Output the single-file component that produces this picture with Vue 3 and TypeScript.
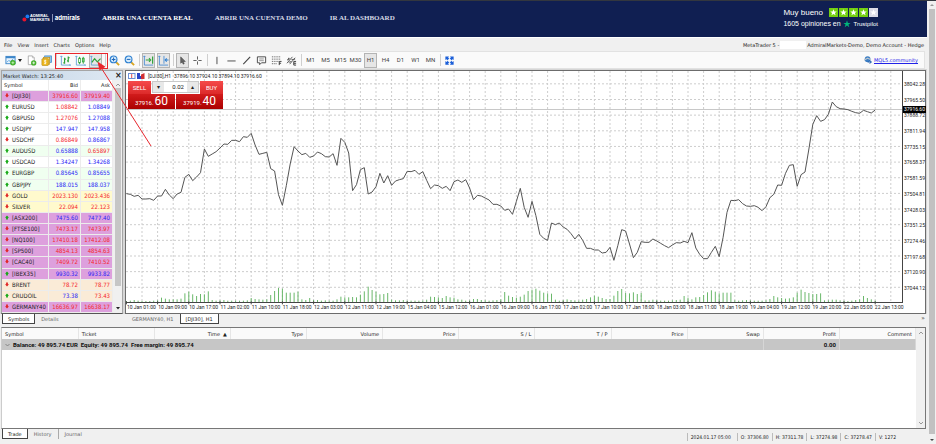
<script setup lang="ts">
interface Quote {
  symbol: string
  up: boolean
  bid: string
  ask: string
  bidTone: 'r' | 'b'
  askTone: 'r' | 'b'
  row: string
}

const q = (symbol: string, dir: string, bid: string, ask: string, tones: string, row = ''): Quote => ({
  symbol,
  up: dir === 'up',
  bid,
  ask,
  bidTone: tones[0] as 'r' | 'b',
  askTone: tones[1] as 'r' | 'b',
  row,
})

const quotes: Quote[] = [
  q('[DJI30]', 'down', '37916.60', '37919.40', 'rr', 'plum'),
  q('EURUSD', 'up', '1.08842', '1.08849', 'rb'),
  q('GBPUSD', 'up', '1.27076', '1.27088', 'rb'),
  q('USDJPY', 'up', '147.947', '147.958', 'bb'),
  q('USDCHF', 'down', '0.86849', '0.86867', 'rb'),
  q('AUDUSD', 'up', '0.65888', '0.65897', 'br', 'mint'),
  q('USDCAD', 'up', '1.34247', '1.34268', 'bb'),
  q('EURGBP', 'up', '0.85645', '0.85655', 'bb', 'mint'),
  q('GBPJPY', 'up', '188.015', '188.037', 'bb', 'mint'),
  q('GOLD', 'down', '2023.130', '2023.436', 'rr', 'lemon'),
  q('SILVER', 'down', '22.094', '22.123', 'rr', 'lemon'),
  q('[ASX200]', 'up', '7475.60', '7477.40', 'bb', 'plum'),
  q('[FTSE100]', 'down', '7473.17', '7473.97', 'rr', 'plum'),
  q('[NQ100]', 'down', '17410.18', '17412.08', 'rr', 'plum'),
  q('[SP500]', 'down', '4854.13', '4854.63', 'rr', 'plum'),
  q('[CAC40]', 'down', '7409.72', '7410.52', 'rr', 'plum'),
  q('[IBEX35]', 'up', '9930.32', '9933.82', 'bb', 'plum'),
  q('BRENT', 'down', '78.72', '78.77', 'rr', 'linen'),
  q('CRUDOIL', 'up', '73.38', '73.43', 'br', 'linen'),
  q('GERMANY40', 'down', '16636.97', '16638.17', 'rr', 'plum'),
]

const menus = ['File', 'View', 'Insert', 'Charts', 'Options', 'Help']
const frames = ['M1', 'M5', 'M15', 'M30', 'H1', 'H4', 'D1', 'W1', 'MN']
const prices = [
  '38042.28', '37965.50', '37888.72', '37811.94', '37735.15', '37658.37', '37581.59',
  '37504.81', '37428.03', '37351.25', '37274.46', '37197.68', '37120.90', '37044.12',
]
const times = [
  '10 Jan 01:00', '10 Jan 09:00', '10 Jan 17:00', '11 Jan 02:00', '11 Jan 10:00', '11 Jan 18:00',
  '12 Jan 03:00', '12 Jan 11:00', '12 Jan 19:00', '15 Jan 04:00', '15 Jan 12:00', '16 Jan 01:00',
  '16 Jan 09:00', '16 Jan 17:00', '17 Jan 02:00', '17 Jan 10:00', '17 Jan 18:00', '18 Jan 03:00',
  '18 Jan 11:00', '18 Jan 19:00', '19 Jan 04:00', '19 Jan 12:00', '19 Jan 20:00', '22 Jan 05:00',
  '22 Jan 13:00',
]
const columns = ['Symbol', 'Ticket', 'Time', 'Type', 'Volume', 'Price', 'S / L', 'T / P', 'Price', 'Swap', 'Profit', 'Comment']
const ohlc = ['2024.01.17 05:00', 'O: 37306.80', 'H: 37311.78', 'L: 37274.98', 'C: 37278.47', 'V: 1272']

// One entry per hourly bar, measured down from the top of the plot.
const closes = [
  374, 376, 382, 379, 390, 390, 389, 394, 381, 381, 361, 378, 389, 375, 370, 325, 316, 335, 324, 311,
  240, 262, 255, 248, 237, 225, 226, 214, 214, 218, 203, 205, 193, 228, 256, 253, 250, 299, 306, 377,
  409, 350, 285, 233, 246, 257, 253, 265, 261, 249, 254, 263, 264, 254, 289, 208, 220, 252, 365, 347,
  302, 296, 375, 369, 353, 313, 342, 320, 349, 336, 332, 329, 307, 308, 304, 316, 308, 334, 359, 348,
  350, 358, 352, 365, 338, 333, 340, 332, 357, 392, 379, 381, 387, 393, 406, 406, 411, 424, 420, 436,
  397, 358, 415, 445, 397, 440, 496, 508, 514, 462, 467, 462, 474, 481, 494, 510, 496, 514, 538, 538,
  543, 543, 552, 550, 535, 574, 530, 482, 486, 525, 566, 550, 518, 520, 520, 510, 516, 523, 530, 536,
  528, 521, 522, 517, 521, 491, 537, 556, 569, 569, 550, 532, 563, 505, 430, 394, 395, 392, 404, 411,
  412, 410, 415, 425, 413, 386, 376, 348, 349, 313, 289, 287, 352, 317, 309, 240, 166, 140, 157, 152,
  136, 99, 113, 119, 120, 122, 127, 131, 133, 124, 128, 132, 123,
]
const volumes = [
  3, 4, 6, 4, 3, 3, 3, 4, 5, 13, 10, 8, 8, 8, 10, 26, 31, 23, 18, 24, 23, 32, 6, 4, 5, 6, 4, 4, 4, 4,
  4, 5, 12, 9, 8, 7, 8, 21, 33, 42, 40, 28, 28, 28, 31, 8, 6, 12, 6, 6, 4, 5, 4, 4, 8, 16, 14, 14, 15,
  14, 22, 32, 46, 36, 31, 23, 24, 27, 7, 5, 5, 6, 4, 4, 4, 4, 4, 7, 16, 15, 14, 12, 18, 14, 13, 8, 7,
  4, 5, 9, 9, 6, 5, 4, 5, 6, 8, 30, 19, 15, 13, 16, 22, 33, 37, 40, 34, 28, 26, 25, 7, 4, 6, 8, 6, 5,
  4, 7, 9, 14, 19, 16, 12, 9, 9, 19, 33, 39, 27, 26, 29, 24, 27, 5, 5, 7, 6, 4, 4, 4, 5, 6, 7, 18, 13,
  8, 14, 15, 21, 29, 35, 31, 26, 28, 28, 28, 5, 4, 5, 6, 5, 4, 4, 4, 5, 9, 18, 14, 12, 10, 11, 14, 28,
  37, 30, 27, 24, 24, 26, 5, 5, 7, 7, 5, 4, 3, 4, 6, 8, 18, 12, 8, 4,
]
const plotHeight = 693
const barX = (i: number) => 1.2 + i * 11.7
const line = closes.map((y, i) => `${barX(i).toFixed(1)},${y - 6}`).join(' ')
const bars = volumes.map((v, i) => `M${barX(i).toFixed(1)} ${plotHeight}v${-v}`).join('')
const gridX = Array.from({ length: 49 }, (_, i) => `M${(barX(4) + i * 46.8).toFixed(1)} 0V${plotHeight}`).join('')
const gridY = prices.map((_, i) => `M0 ${(38.5 + i * 46.95).toFixed(1)}H2328`).join('')
const ticks = times.map((_, i) => `M${barX(i * 8).toFixed(1)} ${plotHeight - 2}v9`).join('')
</script>

<template>
  <div class="page">
    <div class="content">
      <header class="site">
        <a href="#" class="logo" aria-label="Admirals">
          <svg class="dots" viewBox="0 0 8 8" aria-hidden="true">
            <circle cx="2.4" cy="5.6" r="2" fill="#e8142c" />
            <circle cx="5.4" cy="2.4" r="1.9" fill="#1d7df2" />
          </svg>
          <span class="mark">ADMIRAL<br />MARKETS</span>
          <span class="word">admirals</span>
        </a>
        <nav class="links">
          <a href="#" class="on">ABRIR UNA CUENTA REAL</a>
          <a href="#">ABRIR UNA CUENTA DEMO</a>
          <a href="#">IR AL DASHBOARD</a>
        </nav>
        <div class="trust">
          <div class="trust-row">
            <span class="verdict">Muy bueno</span>
            <span class="stars">
              <svg v-for="n in 5" :key="n" viewBox="0 0 9 9" :class="{ off: n === 5 }" aria-hidden="true">
                <path d="M4.5 1.2l.9 2.2 2.4.1-1.9 1.5.7 2.3-2.1-1.3-2.1 1.3.7-2.3-1.9-1.5 2.4-.1z" fill="#fff" />
              </svg>
            </span>
          </div>
          <div class="trust-row second">
            <span class="count">1605 opiniones en</span>
            <svg class="tp" viewBox="0 0 9 9" aria-hidden="true">
              <path d="M4.5 .4l1 2.9h3.1L6.1 5.1l1 3-2.6-1.9-2.6 1.9 1-3L.4 3.3h3.1z" fill="#00b67a" />
            </svg>
            <span class="brand">Trustpilot</span>
          </div>
        </div>
      </header>

      <div class="menubar">
        <nav class="menus">
          <button v-for="m in menus" :key="m" type="button">{{ m }}</button>
        </nav>
        <div class="account">
          <span>MetaTrader 5 -</span><span class="blank"></span><span>AdmiralMarkets-Demo, Demo Account - Hedge</span>
        </div>
      </div>

      <div class="toolbar">
        <button type="button" class="tool wide" aria-label="New chart">
          <svg class="ic" viewBox="0 0 12 12"><rect x="1" y="1.5" width="10" height="8" fill="#e9f3fd" stroke="#3c86c9" /><path d="M1 2.5h10" stroke="#3c86c9" stroke-width="2" /><path d="M2 8l2-2 2 1 3-3" fill="none" stroke="#57a5df" /><circle cx="8.6" cy="8.5" r="3" fill="#43b02a" /><path d="M7 8.5h3.2M8.6 6.9v3.2" stroke="#d9ffd0" stroke-width=".8" /></svg>
          <svg class="caret" viewBox="0 0 4 3"><path d="M0 0h4L2 3z" fill="#222" /></svg>
        </button>
        <button type="button" class="tool" aria-label="Profiles">
          <svg class="ic" viewBox="0 0 12 12"><path d="M2.5 1h4.5l2 2v7.500H2.500z" fill="#fff" stroke="#9a9a9a" stroke-width=".8" /><path d="M7 1v2h2" fill="none" stroke="#9a9a9a" stroke-width=".6" /><circle cx="8.400" cy="8.600" r="2.900" fill="#43b02a" /><path d="M6.900 8.600h3M8.400 7.100v3" stroke="#fff" stroke-width=".8" /></svg>
        </button>
        <button type="button" class="tool" aria-label="Market">
          <svg class="ic" viewBox="0 0 12 12"><rect x="4" y="1" width="7.500" height="7" fill="#8dc3ee" stroke="#3c86c9" stroke-width=".8" /><rect x="2.500" y="2.500" width="7" height="7.500" fill="#f6d878" stroke="#b98a12" stroke-width=".7" /><rect x="1" y="4" width="7" height="7.500" rx=".8" fill="#efb91f" stroke="#b98a12" stroke-width=".7" /><path d="M5.700 6.200c-1.800-1-2.800.6-1 1.400s.6 2.200-1.300 1.400M4.500 5.200v5" fill="none" stroke="#fff" stroke-width=".8" /></svg>
        </button>
        <i class="sep"></i>
        <button type="button" class="tool" aria-label="Bar chart">
          <svg class="ic" viewBox="0 0 12 12"><path d="M1.500 1v10H11.500M.5 2l1-1 1 1M10.500 10l1 1-1 1" fill="none" stroke="#5b9bd5" stroke-width=".9" /><path d="M5 3v6.500M3.600 8.500H5M5 4.500h1.400M9 1.500V8M7.600 6.500H9M9 3h1.600" stroke="#2fa33a" stroke-width="1.300" /></svg>
        </button>
        <button type="button" class="tool" aria-label="Candlesticks">
          <svg class="ic" viewBox="0 0 12 12"><path d="M1.500 1v10H11.500M.5 2l1-1 1 1M10.500 10l1 1-1 1" fill="none" stroke="#5b9bd5" stroke-width=".9" /><path d="M5 2v8M9 2v7.500" stroke="#2fa33a" /><rect x="4" y="3.500" width="2" height="5" fill="#fff" stroke="#2fa33a" stroke-width=".8" /><rect x="8" y="3.500" width="2" height="4" fill="#7cd67f" stroke="#2fa33a" stroke-width=".8" /></svg>
        </button>
        <button type="button" class="tool" aria-label="Line chart" aria-pressed="true">
          <svg class="ic" viewBox="0 0 12 12"><path d="M1.500 1v10H11.500M.5 2l1-1 1 1M10.500 10l1 1-1 1" fill="none" stroke="#5b9bd5" stroke-width=".9" /><path d="M2 8l3-4 3 3.500L11.500 4" fill="none" stroke="#2fa33a" stroke-width="1.300" /></svg>
        </button>
        <i class="sep"></i>
        <button type="button" class="tool" aria-label="Zoom in">
          <svg class="ic" viewBox="0 0 12 12"><path d="M7.500 7.500l3.500 3.500" stroke="#d9a520" stroke-width="2" /><circle cx="5" cy="4.800" r="3.700" fill="#d5ebfc" stroke="#2f80d0" stroke-width="1.200" /><path d="M3 4.800h4M5 2.800v4" stroke="#1f66b8" stroke-width="1.100" /></svg>
        </button>
        <button type="button" class="tool" aria-label="Zoom out">
          <svg class="ic" viewBox="0 0 12 12"><path d="M7.500 7.500l3.500 3.500" stroke="#d9a520" stroke-width="2" /><circle cx="5" cy="4.800" r="3.700" fill="#d5ebfc" stroke="#2f80d0" stroke-width="1.200" /><path d="M3 4.800h4" stroke="#1f66b8" stroke-width="1.100" /></svg>
        </button>
        <i class="sep"></i>
        <button type="button" class="tool" aria-label="Auto scroll" aria-pressed="true">
          <svg class="ic" viewBox="0 0 12 12"><path d="M1.500 1v10H11M.5 2l1-1 1 1" fill="none" stroke="#3f87d2" stroke-width=".9" /><path d="M3 5.500h5M6.500 3.500l2 2-2 2" fill="none" stroke="#2fa33a" stroke-width="1.100" /><path d="M10.500 1.500v8" stroke="#2fa33a" stroke-width="1.300" /></svg>
        </button>
        <button type="button" class="tool" aria-label="Chart shift" aria-pressed="true">
          <svg class="ic" viewBox="0 0 12 12"><path d="M1.500 1v10H11M.5 2l1-1 1 1M6.500 1v8.500" fill="none" stroke="#3f87d2" stroke-width=".9" /><path d="M11.500 5.500H8M9.500 3.700L7.700 5.500l1.800 1.800" fill="none" stroke="#2f80d0" stroke-width="1.100" /></svg>
        </button>
        <i class="sep"></i>
        <button type="button" class="tool" aria-label="Cursor" aria-pressed="true">
          <svg class="ic" viewBox="0 0 12 12"><path d="M4 2v7l1.700-1.500 1 2.500 1.200-.5-1-2.400h2.200z" fill="#666" stroke="#333" stroke-width=".5" /></svg>
        </button>
        <button type="button" class="tool" aria-label="Crosshair">
          <svg class="ic" viewBox="0 0 12 12"><path d="M6 1.500v3.500M6 7v3.500M1.500 6H5M7 6h3.500" stroke="#555" /></svg>
        </button>
        <i class="sep"></i>
        <button type="button" class="tool" aria-label="Vertical line"><svg class="ic" viewBox="0 0 12 12"><path d="M6.500 2v8" stroke="#444" /></svg></button>
        <button type="button" class="tool" aria-label="Horizontal line"><svg class="ic" viewBox="0 0 12 12"><path d="M1.500 6.500h9" stroke="#444" /></svg></button>
        <button type="button" class="tool" aria-label="Trendline"><svg class="ic" viewBox="0 0 12 12"><path d="M2.500 10l7.500-8" stroke="#444" stroke-width="1.200" /></svg></button>
        <button type="button" class="tool" aria-label="Text label"><svg class="ic" viewBox="0 0 12 12"><path d="M1.500 2h9v6.500H6l-2 2v-2H1.500z" fill="none" stroke="#444" /><path d="M3.500 4.300h5M3.500 6.200h5" stroke="#777" stroke-width=".8" /></svg></button>
        <button type="button" class="tool" aria-label="Fibonacci">
          <svg class="ic" viewBox="0 0 12 12"><path d="M1 2h9.500M1 4.500h9.500M1 7h7M1 9.500h6" stroke="#444" stroke-dasharray="1 1" /><path d="M9 11V7h2.500M9 9h2" fill="none" stroke="#333" /></svg>
        </button>
        <button type="button" class="tool" aria-label="Elliott tools">
          <svg class="ic" viewBox="0 0 12 12"><path d="M1 9l6-7M4 10l6-7M1.500 5l3-1M3 8l3-1M6 5l4-.5M2 6l1-3" fill="none" stroke="#555" /><path d="M11 7H8.500v4H11M8.500 9H11" fill="none" stroke="#333" /></svg>
        </button>
        <i class="sep"></i>
        <button v-for="f in frames" :key="f" type="button" class="tool frame" :aria-pressed="f === 'H1'">{{ f }}</button>
        <i class="sep"></i>
        <button type="button" class="tool" aria-label="Full screen">
          <svg class="ic" viewBox="0 0 12 12"><path d="M1.500 1.500H5.500L4.500 2.700 6 4.300 4.300 6 2.700 4.500 1.500 5.500zM10.500 1.500v4L9.300 4.500 7.700 6 6 4.300 7.500 2.700 6.500 1.500zM1.500 10.500v-4l1.200 1L4.300 6 6 7.700 4.500 9.300l1 1.200zM10.500 10.500h-4l1-1.200L6 7.700 7.700 6l1.600 1.500 1.200-1z" fill="#1b5fd9" /><path d="M6 3.500L8.500 6 6 8.500 3.500 6z" fill="#fafafa" /></svg>
        </button>
        <a href="#" class="community">
          <svg viewBox="0 0 8 8" aria-hidden="true"><circle cx="3.600" cy="3.200" r="2.900" fill="#3d7fc4" /><path d="M0 4.200l3.600-2 3.400 1.500" fill="none" stroke="#b9c5d0" stroke-width="1.200" /><path d="M3.500 6h3.500M5.600 4.500L7.500 6 5.600 7.500" fill="none" stroke="#1c5cae" /></svg>
          <span>MQL5.community</span>
        </a>
        <svg class="note" viewBox="0 0 100 96" aria-hidden="true">
          <rect x="1.500" y="1.500" width="52" height="15" fill="none" stroke="#e8262d" />
          <path d="M97 94L46 14" stroke="#e8262d" stroke-width="1" />
          <path d="M43.500 9.500l8 5.200-6 3.800z" fill="#e8262d" />
        </svg>
      </div>

      <main class="work">
        <section class="watch">
          <div class="watch-title"><span>Market Watch: 13:25:40</span><button type="button" aria-label="Close">×</button></div>
          <div class="watch-body">
            <table class="quotes">
              <thead>
                <tr><th>Symbol</th><th>Bid</th><th>Ask</th></tr>
              </thead>
              <tbody>
                <tr v-for="r in quotes" :key="r.symbol" :class="r.row">
                  <td>
                    <svg class="dir" :class="{ up: r.up }" viewBox="0 0 5 5" aria-hidden="true">
                      <path v-if="r.up" d="M2.500 0L5 2.700H3.600V5H1.400V2.700H0z" />
                      <path v-else d="M2.500 5L5 2.300H3.600V0H1.400v2.300H0z" />
                    </svg>{{ r.symbol }}
                  </td>
                  <td :class="r.bidTone">{{ r.bid }}</td>
                  <td :class="r.askTone">{{ r.ask }}</td>
                </tr>
              </tbody>
            </table>
            <div class="vbar">
              <svg viewBox="0 0 6 4"><path d="M1 3l2-2 2 2" fill="none" stroke="#999" /></svg>
              <i></i>
              <svg viewBox="0 0 6 4"><path d="M1 1h4L3 3.500z" fill="#222" /></svg>
            </div>
          </div>
        </section>

        <section class="chart">
          <div class="plot">
            <svg class="canvas" viewBox="0 0 2328 693" preserveAspectRatio="none" role="img" aria-label="DJI30 hourly line chart">
              <path class="grid" :d="gridX" />
              <path class="grid" :d="gridY" />
              <path class="now" d="M0 115.500H2328" />
              <path class="vol" :d="bars" />
              <polyline class="close" :points="line" />
              <path class="tick" :d="ticks" />
            </svg>
            <div class="caption">
              <svg viewBox="0 0 17 6" aria-hidden="true"><rect x=".5" y=".5" width="6.500" height="5" fill="#fff" stroke="#6b8fd6" /><path d="M3.700 1v4" stroke="#e05050" /><path d="M9 0h3v3h2V1h2v5H9z" fill="#2b46c8" /><path d="M13 1.500L16.500 0v6H13z" fill="#d23030" /></svg>
              <span>[DJI30],H1</span><span>37896.10 37924.10 37894.10 37916.60</span>
            </div>
            <div class="trade">
              <button type="button" class="side">SELL</button>
              <div class="lots">
                <button type="button" aria-label="Less">▾</button>
                <input type="text" value="0.02" aria-label="Volume" />
                <button type="button" aria-label="More">▴</button>
              </div>
              <button type="button" class="side">BUY</button>
              <button type="button" class="quote">37916.<b>60</b></button>
              <button type="button" class="quote">37919.<b>40</b></button>
            </div>
          </div>
          <div class="prices">
            <span v-for="p in prices" :key="p">{{ p }}</span>
            <strong>37916.60</strong>
          </div>
          <div class="times"><span v-for="t in times" :key="t">{{ t }}</span></div>
        </section>
      </main>

      <div class="tabs">
        <div class="tabset watch-tabs">
          <button type="button" class="tab on">Symbols</button>
          <button type="button" class="tab">Details</button>
        </div>
        <div class="tabset">
          <button type="button" class="tab">GERMANY40, H1</button>
          <button type="button" class="tab on">[DJI30], H1</button>
        </div>
        <span class="more">»</span>
      </div>

      <section class="terminal">
        <table class="positions">
          <thead>
            <tr>
              <th v-for="(c, i) in columns" :key="i">{{ c }}<span v-if="c === 'Time'" class="asc">▲</span></th>
            </tr>
          </thead>
          <tbody>
            <tr>
              <td colspan="10"><svg class="fold" viewBox="0 0 5 4" aria-hidden="true"><path d="M.5 1l2 2 2-2" fill="none" stroke="#777" stroke-width=".8" /></svg>Balance: 49 895.74 EUR&nbsp; Equity: 49 895.74&nbsp; Free margin: 49 895.74</td>
              <td>0.00</td>
              <td></td>
            </tr>
          </tbody>
        </table>
        <div class="vbar light">
          <svg viewBox="0 0 6 4"><path d="M1 3l2-2 2 2" fill="none" stroke="#999" /></svg>
          <svg viewBox="0 0 6 4"><path d="M1 1l2 2 2-2" fill="none" stroke="#999" /></svg>
        </div>
      </section>

      <footer class="status">
        <div class="tabset">
          <button type="button" class="tab on">Trade</button>
          <button type="button" class="tab">History</button>
          <button type="button" class="tab last">Journal</button>
        </div>
        <div class="ohlc"><span v-for="o in ohlc" :key="o">{{ o }}</span></div>
      </footer>
    </div>

    <div class="pagebar">
      <svg viewBox="0 0 6 4"><path d="M1 3h4L3 1z" fill="#999" /></svg>
      <i></i>
      <svg viewBox="0 0 6 4"><path d="M1 1h4L3 3z" fill="#444" /></svg>
    </div>
  </div>
</template>

<style>
body {
  margin: 0;
  background: #f0f0f0;
}
</style>

<style scoped>
* {
  box-sizing: border-box;
}
button,
input {
  margin: 0;
  padding: 0;
  border: 0;
  background: none;
  font: inherit;
  color: inherit;
}
svg {
  display: block;
}
.page {
  display: flex;
  height: 100vh;
  border-top: 1px solid #33373f;
  background: #f0f0f0;
  color: #222;
  font: 6px/8px Roboto, 'Liberation Sans', sans-serif;
  white-space: nowrap;
}
.menubar,
.community,
.watch-title,
.quotes th,
.tabs,
.positions th,
.status {
  font-family: 'DejaVu Sans', sans-serif;
  font-size: 5px;
}
.content {
  flex: 1;
  min-width: 0;
  display: grid;
  grid-template-columns: minmax(0, 1fr);
  grid-template-rows: 36px 14px 18px minmax(0, 245fr) 13px minmax(0, 102fr) 15px;
}
.site {
  display: flex;
  align-items: center;
  padding: 0 49px 2px 22px;
  background: #101f52;
  color: #fff;
}
.site a {
  color: inherit;
  text-decoration: none;
}
.logo {
  display: flex;
  align-items: center;
  width: 80px;
}
.dots {
  width: 8px;
  height: 8px;
}
.mark {
  padding-right: 2px;
  border-right: 1px solid #8b94b5;
  font: bold 4px/4px 'Liberation Sans', sans-serif;
}
.word {
  margin-left: 2px;
  font: bold 6px/8px Inter, sans-serif;
}
.links {
  display: flex;
  gap: 22px;
  font: bold 7px/10px 'Liberation Serif', serif;
  color: #d5d8e4;
}
.links .on {
  color: #fff;
}
.trust {
  margin-left: auto;
  font-family: 'Liberation Sans', sans-serif;
}
.trust-row {
  display: flex;
  align-items: center;
  justify-content: space-between;
  height: 11px;
}
.second {
  gap: 1px;
}
.verdict {
  font-size: 8px;
  margin-right: 6px;
}
.count {
  font-size: 7px;
}
.brand {
  font-size: 6px;
}
.tp {
  width: 8px;
  height: 8px;
}
.stars {
  display: flex;
  gap: 1px;
}
.stars svg {
  width: 9px;
  height: 9px;
  background: #73cf11;
}
.stars .off {
  background: #dcdce6;
}
.menubar {
  display: flex;
  align-items: center;
  justify-content: space-between;
  padding: 0 3px 0 4px;
  border-top: 1px solid #fff;
}
.menus {
  display: flex;
  gap: 5px;
}
.account {
  display: flex;
}
.blank {
  width: 26px;
  margin: 0 1px;
  background: #fff;
}
.toolbar {
  position: relative;
  display: flex;
  align-items: center;
  margin-right: 2px;
  padding: 0 6px 0 3px;
  border: 1px solid #e2e2e2;
  border-left: 0;
  background: #fafafa;
}
.tool {
  flex: none;
  display: flex;
  align-items: center;
  justify-content: center;
  width: 15px;
  height: 15px;
}
.tool[aria-pressed='true'] {
  width: 13px;
  margin: 0 1px;
  border: 1px solid #b4b4b4;
  background: #e6e6e6;
}
.wide {
  width: 21px;
  gap: 2px;
}
.ic {
  flex: none;
  width: 11px;
  height: 11px;
}
.caret {
  width: 4px;
  height: 3px;
}
.sep {
  flex: none;
  width: 1px;
  height: 12px;
  margin: 0 1px 0 2px;
  background: #cfcfcf;
}
.frame {
  color: #444;
}
.community {
  display: flex;
  align-items: center;
  gap: 2px;
  margin-left: auto;
  color: #2222e8;
}
.community svg {
  width: 8px;
  height: 8px;
}
.note {
  position: absolute;
  z-index: 2;
  left: 54px;
  top: 0;
  width: 100px;
  height: 96px;
  pointer-events: none;
}
.work {
  display: flex;
  padding: 1px 1px 0;
  background: #d6d6d6;
}
.watch {
  flex: none;
  display: flex;
  flex-direction: column;
  width: 122px;
  border: 1px solid #a5a5a5;
  border-bottom: 1px solid #555;
  background: #fff;
}
.watch-title {
  display: flex;
  align-items: center;
  justify-content: space-between;
  height: 9px;
  padding: 0 1px;
  background: linear-gradient(90deg, #c4d5e6, #dfe9f3);
}
.watch-title button {
  width: 6px;
  font-size: 8px;
  font-weight: bold;
  line-height: 6px;
}
.watch-body {
  flex: 1;
  min-height: 0;
  display: flex;
}
.quotes {
  flex: 1;
  height: 100%;
  table-layout: fixed;
  border-collapse: collapse;
}
.quotes th,
.quotes td {
  padding: 0 2px;
  border-right: 1px solid #ececec;
  border-bottom: 1px solid #ececec;
  text-align: right;
  font-weight: normal;
  line-height: 8px;
}
.quotes th {
  height: 10px;
}
.quotes td {
  font-family: 'DejaVu Sans Condensed', 'DejaVu Sans', sans-serif;
  font-stretch: condensed;
}
.quotes th:first-child,
.quotes td:first-child {
  width: 44px;
  text-align: left;
}
.dir {
  display: inline-block;
  width: 4px;
  height: 5px;
  margin: 0 3px 0 1px;
  fill: #e02424;
}
.dir.up {
  fill: #13a813;
}
.r {
  color: #f5262c;
}
.b {
  color: #2626f5;
}
.plum {
  background: #dda0dd;
}
.mint {
  background: #f0fff0;
}
.lemon {
  background: #fffacd;
}
.linen {
  background: #faebd7;
}
.vbar {
  flex: none;
  display: flex;
  flex-direction: column;
  align-items: center;
  justify-content: space-between;
  width: 9px;
  padding: 3px 0;
  background: #f0f0f0;
}
.vbar svg {
  width: 6px;
  height: 4px;
}
.vbar i {
  flex: 1;
  width: 6px;
  margin: 1px 0 20px;
  background: #c6c6c6;
}
.chart {
  flex: 1;
  min-width: 0;
  display: grid;
  grid-template-columns: minmax(0, 1fr) 22px;
  grid-template-rows: minmax(0, 1fr) 10px;
  margin-left: 2px;
  border: 1px solid #6c6c6c;
  background: #fff;
}
.plot {
  position: relative;
  border-right: 1px solid #444;
  border-bottom: 1px solid #444;
}
.canvas {
  width: 100%;
  height: 100%;
  overflow: visible;
}
.canvas * {
  fill: none;
  vector-effect: non-scaling-stroke;
}
.grid {
  stroke: #cdcdcd;
  stroke-dasharray: 2 2;
}
.now {
  stroke: #c8c8c8;
}
.vol {
  stroke: #6ab86a;
}
.close {
  stroke: #555;
}
.tick {
  stroke: #444;
}
.caption {
  position: absolute;
  top: 1px;
  left: 2px;
  display: flex;
  align-items: center;
  gap: 3px;
  font-size: 5px;
}
.caption svg {
  width: 17px;
  height: 6px;
}
.trade {
  position: absolute;
  top: 10px;
  left: 2px;
  display: grid;
  grid-template-columns: 23px 23px 23px 23px;
  grid-template-rows: 13px 15px;
  column-gap: 1px;
  color: #fff;
}
.side {
  background: linear-gradient(#f54a4a, #dc2a2a);
}
.lots {
  grid-column: span 2;
  display: flex;
  height: 12px;
  border: 1px solid #c9c9c9;
  background: #fff;
  color: #222;
}
.lots button {
  flex: none;
  width: 11px;
  background: #e8e8e8;
}
.lots input {
  flex: 1;
  min-width: 0;
  text-align: right;
  padding-right: 3px;
}
.quote {
  grid-column: span 2;
  display: flex;
  align-items: baseline;
  justify-content: center;
  background: linear-gradient(#d21c1c, #ab0000);
  line-height: 15px;
}
.quote b {
  margin-left: 1px;
  font-size: 12px;
  font-weight: normal;
}
.prices {
  position: relative;
  display: grid;
  grid-auto-rows: minmax(0, 1fr);
  align-items: center;
  padding: 5px 0 7px 1px;
  font-size: 5px;
}
.prices strong {
  position: absolute;
  top: 35px;
  left: 0;
  padding: 0 1px;
  background: #000;
  color: #fff;
  font-weight: normal;
  line-height: 7px;
}
.times {
  grid-column: span 2;
  display: grid;
  grid-auto-flow: column;
  grid-auto-columns: minmax(0, 1fr);
  padding: 0 19px 0 1px;
  font-family: 'Liberation Sans Narrow', Roboto, sans-serif;
  font-size: 5px;
}
.tabs {
  display: flex;
  align-items: flex-start;
  background: #f0f0f0;
}
.tabset {
  display: flex;
  align-items: flex-start;
  padding-left: 2px;
}
.watch-tabs {
  width: 124px;
}
.tab {
  height: 10px;
  padding: 0 6px;
  color: #666;
}
.tab.on {
  padding: 0 5px;
  border: 1px solid #444;
  border-top: 0;
  background: #fff;
  color: #222;
}
.tab.last {
  border-left: 1px solid #aaa;
}
.more {
  margin-left: auto;
  padding-right: 2px;
  font-size: 6px;
}
.terminal {
  display: flex;
  align-items: flex-start;
  margin: 0 1px;
  border: 1px solid #777;
  border-left-color: #ccc;
  background: #fff;
}
.positions {
  flex: 1;
  width: 100%;
  table-layout: fixed;
  border-collapse: collapse;
}
.positions th,
.positions td {
  height: 11px;
  padding: 0 3px;
  border-right: 1px solid #e6e6e6;
  text-align: right;
  font-weight: normal;
}
.positions th:nth-child(-n + 2),
.positions td:first-child {
  text-align: left;
}
.positions thead {
  background: #fafafa;
}
.positions td {
  background: #c6c6c6;
  border-color: #d6d6d6;
  font-weight: bold;
  color: #111;
}
.asc {
  margin-left: 3px;
}
.fold {
  display: inline-block;
  width: 5px;
  height: 4px;
  margin-right: 3px;
}
.light {
  align-self: stretch;
}
.status {
  display: flex;
  justify-content: space-between;
  padding-right: 28px;
}
.ohlc {
  display: flex;
  align-items: center;
  font-family: 'DejaVu Sans Condensed', 'DejaVu Sans', sans-serif;
  font-stretch: condensed;
}
.ohlc span {
  padding: 0 3px;
  border-left: 1px solid #bbb;
}
.ohlc span:first-child {
  padding-right: 6px;
}
.pagebar {
  flex: none;
  display: flex;
  flex-direction: column;
  align-items: center;
  width: 9px;
  padding: 2px 0;
  background: #f0f0f0;
}
.pagebar svg {
  width: 6px;
  height: 4px;
}
.pagebar i {
  flex: 1;
  width: 6px;
  margin: 2px 0 4px;
  background: #c1c1c1;
}
</style>
